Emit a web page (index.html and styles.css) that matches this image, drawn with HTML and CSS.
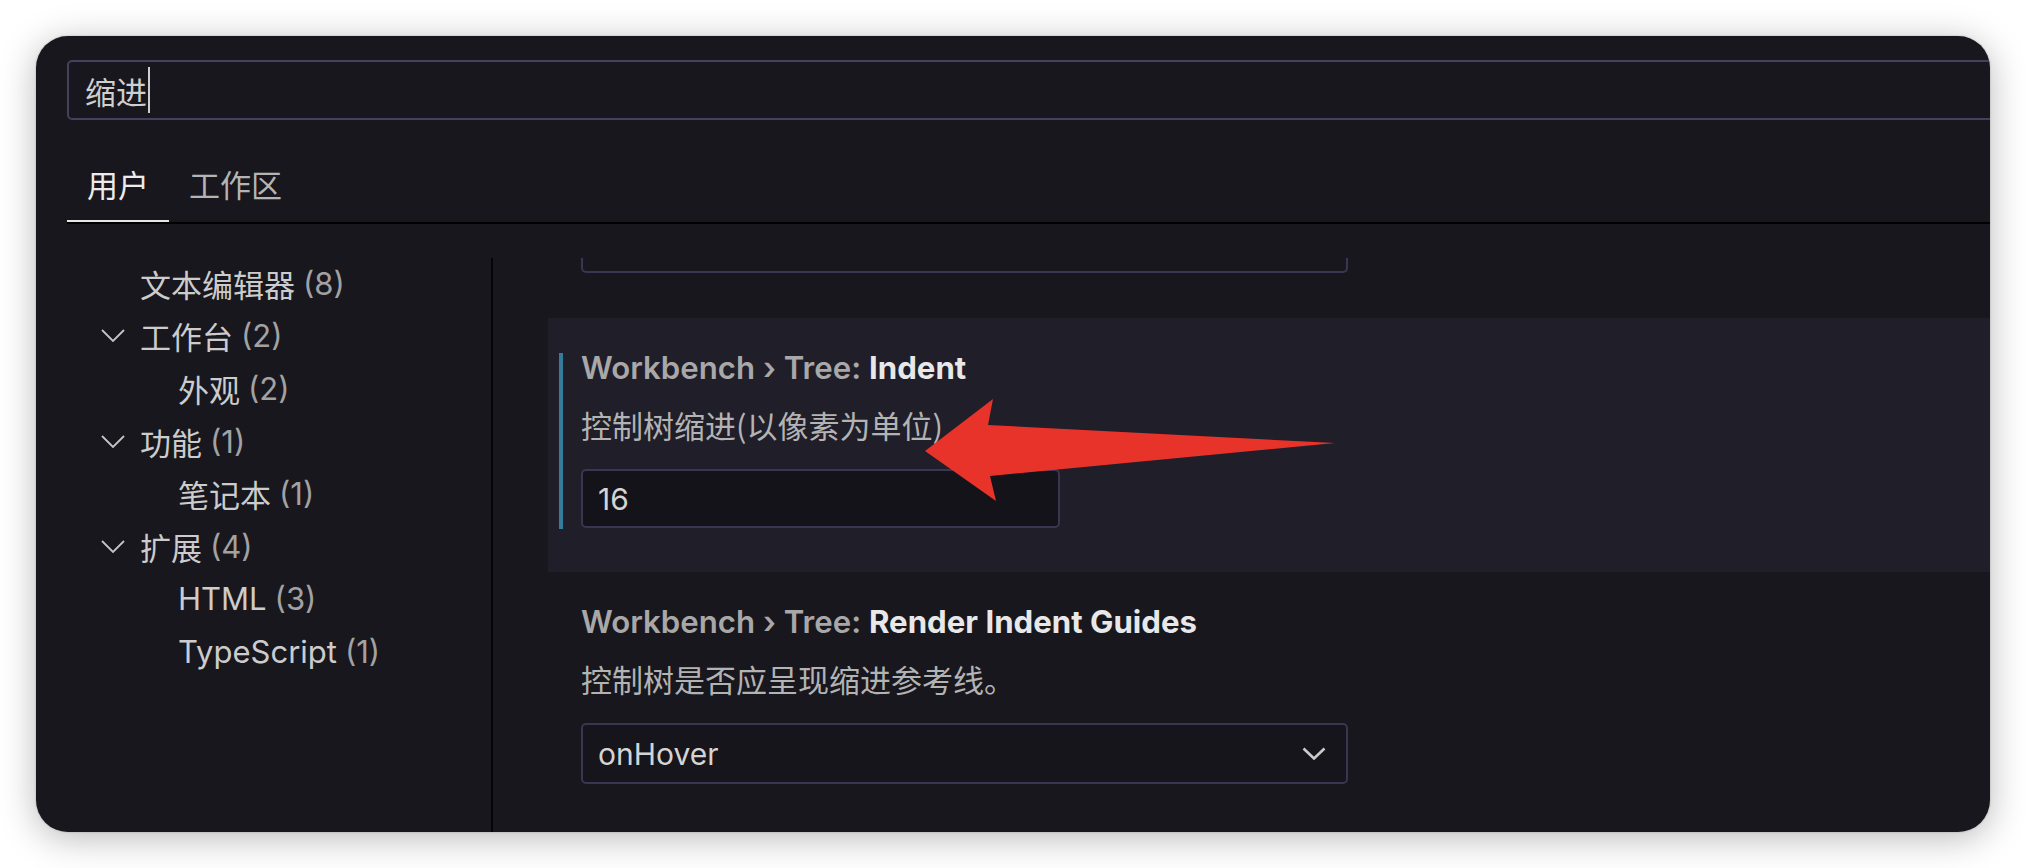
FILE: index.html
```html
<!DOCTYPE html>
<html lang="zh-CN">
<head>
<meta charset="utf-8">
<title>设置</title>
<link rel="stylesheet" href="styles.css">
</head>
<body>
<div class="window">
  <header class="header">
    <div class="search"><span class="query">缩进</span><span class="caret"></span></div>
    <div class="tabs">
      <div class="tab active">用户</div>
      <div class="tab">工作区</div>
    </div>
  </header>
  <div class="body">
    <nav class="tree">
      <div class="row lvl0"><span class="twisty"></span><span class="label">文本编辑器</span><span class="count">(8)</span></div>
      <div class="row lvl0"><span class="twisty"><svg viewBox="0 0 24 13" class="chev"><path d="M1 1 L12 12 L23 1"/></svg></span><span class="label">工作台</span><span class="count">(2)</span></div>
      <div class="row lvl1"><span class="twisty"></span><span class="label">外观</span><span class="count">(2)</span></div>
      <div class="row lvl0"><span class="twisty"><svg viewBox="0 0 24 13" class="chev"><path d="M1 1 L12 12 L23 1"/></svg></span><span class="label">功能</span><span class="count">(1)</span></div>
      <div class="row lvl1"><span class="twisty"></span><span class="label">笔记本</span><span class="count">(1)</span></div>
      <div class="row lvl0"><span class="twisty"><svg viewBox="0 0 24 13" class="chev"><path d="M1 1 L12 12 L23 1"/></svg></span><span class="label">扩展</span><span class="count">(4)</span></div>
      <div class="row lvl1"><span class="twisty"></span><span class="label">HTML</span><span class="count">(3)</span></div>
      <div class="row lvl1"><span class="twisty"></span><span class="label">TypeScript</span><span class="count">(1)</span></div>
    </nav>
    <div class="divider"></div>
    <main class="list">
      <div class="prev-box"></div>
      <section class="setting focused">
        <div class="title"><span class="cat">Workbench › Tree: </span><span class="key">Indent</span></div>
        <div class="desc">控制树缩进(以像素为单位)</div>
        <div class="input">16</div>
      </section>
      <section class="setting">
        <div class="title"><span class="cat">Workbench › Tree: </span><span class="key">Render Indent Guides</span></div>
        <div class="desc">控制树是否应呈现缩进参考线。</div>
        <div class="select"><span>onHover</span><svg viewBox="0 0 24 13" class="sel-chev"><path d="M1.5 1.5 L12 11.5 L22.5 1.5"/></svg></div>
      </section>
    </main>
  </div>
  <svg class="arrow" viewBox="0 0 1954 796" width="1954" height="796">
    <polygon points="889,415 957,363 952,389 1299,407 954,440 960,465"/>
  </svg>
</div>
</body>
</html>
```

FILE: styles.css
```css
* { box-sizing: border-box; }
html, body { margin: 0; padding: 0; }
body {
  background: #ffffff;
  width: 2026px;
  height: 868px;
  overflow: hidden;
  font-family: Inter, "Noto Sans CJK SC", sans-serif;
}
.window {
  position: relative;
  margin: 36px;
  width: 1954px;
  height: 796px;
  background: #18171e;
  border-radius: 32px;
  overflow: hidden;
  box-shadow: 0 6px 36px rgba(0, 0, 0, 0.28), 0 0 2px rgba(0, 0, 0, 0.25);
  display: flex;
  flex-direction: column;
}
.header {
  padding: 24px 0 0 31px;
  margin-right: -60px;
}
.search {
  height: 60px;
  border: 2px solid #463f5e;
  border-radius: 5px;
  display: flex;
  align-items: center;
  padding-left: 16px;
  font-family: "Noto Sans CJK SC", sans-serif;
  font-size: 31px;
  color: #cfcfcf;
}
.caret {
  width: 2px;
  height: 46px;
  background: #cfcfcf;
  margin-left: 1px;
}
.tabs {
  display: flex;
  border-bottom: 2px solid #000;
}
.tab {
  padding: 45px 20px 20px;
  line-height: 37px;
  font-family: "Noto Sans CJK SC", sans-serif;
  font-size: 31px;
  color: #b4b4b4;
}
.tab.active {
  color: #ececec;
  box-shadow: inset 0 -2px 0 #e6e6e6;
}
.body {
  flex: 1;
  display: flex;
  min-height: 0;
}
.tree {
  width: 455px;
  padding-top: 33px;
}
.row {
  height: 52.6px;
  display: flex;
  align-items: center;
  font-size: 31px;
  color: #cccccc;
  white-space: nowrap;
}
.row.lvl0 { padding-left: 65px; }
.row.lvl1 { padding-left: 103px; }
.twisty {
  width: 39px;
  display: flex;
  align-items: center;
}
.chev {
  width: 24px;
  height: 13px;
  fill: none;
  stroke: #c4c4c4;
  stroke-width: 1.8;
}
.count {
  margin-left: 8px;
  color: #a2a2a2;
}
.divider {
  width: 2px;
  margin-top: 34px;
  background: #050507;
}
.list {
  flex: 1;
  padding: 34px 0 0 55px;
  overflow: hidden;
}
.prev-box {
  margin-left: 33px;
  width: 767px;
  height: 15px;
  border: 2px solid #3a3550;
  border-top: none;
  border-radius: 0 0 5px 5px;
}
.setting {
  position: relative;
  padding: 32px 0 44px 33px;
}
.setting.focused {
  margin-top: 45px;
  background: #201e29;
}
.setting.focused::before {
  content: "";
  position: absolute;
  left: 11px;
  top: 35px;
  width: 4px;
  height: 176px;
  background: #367a9c;
}
.title {
  line-height: 36px;
  font-size: 31.2px;
  white-space: nowrap;
}
.cat { font-weight: 600; color: #a8a8a8; }
.key { font-weight: 700; color: #e8e8e8; }
.desc {
  margin-top: 21px;
  line-height: 36px;
  font-family: "Noto Sans CJK SC", sans-serif;
  font-size: 31px;
  color: #b3b3b3;
}
.input {
  margin-top: 26px;
  width: 479px;
  height: 59px;
  border: 2px solid #3a3550;
  border-radius: 5px;
  background: #141319;
  padding-left: 15px;
  display: flex;
  align-items: center;
  font-size: 30px;
  color: #d4d4d4;
}
.select {
  margin-top: 26px;
  width: 767px;
  height: 61px;
  border: 2px solid #3a3550;
  border-radius: 5px;
  background: #16151b;
  padding: 0 20px 0 15px;
  display: flex;
  align-items: center;
  justify-content: space-between;
  font-size: 30px;
  color: #d4d4d4;
}
.sel-chev {
  width: 24px;
  height: 13px;
  fill: none;
  stroke: #cacaca;
  stroke-width: 2.6;
}
.arrow {
  position: absolute;
  left: 0;
  top: 0;
  pointer-events: none;
}
.arrow polygon { fill: #e8332a; }
```
